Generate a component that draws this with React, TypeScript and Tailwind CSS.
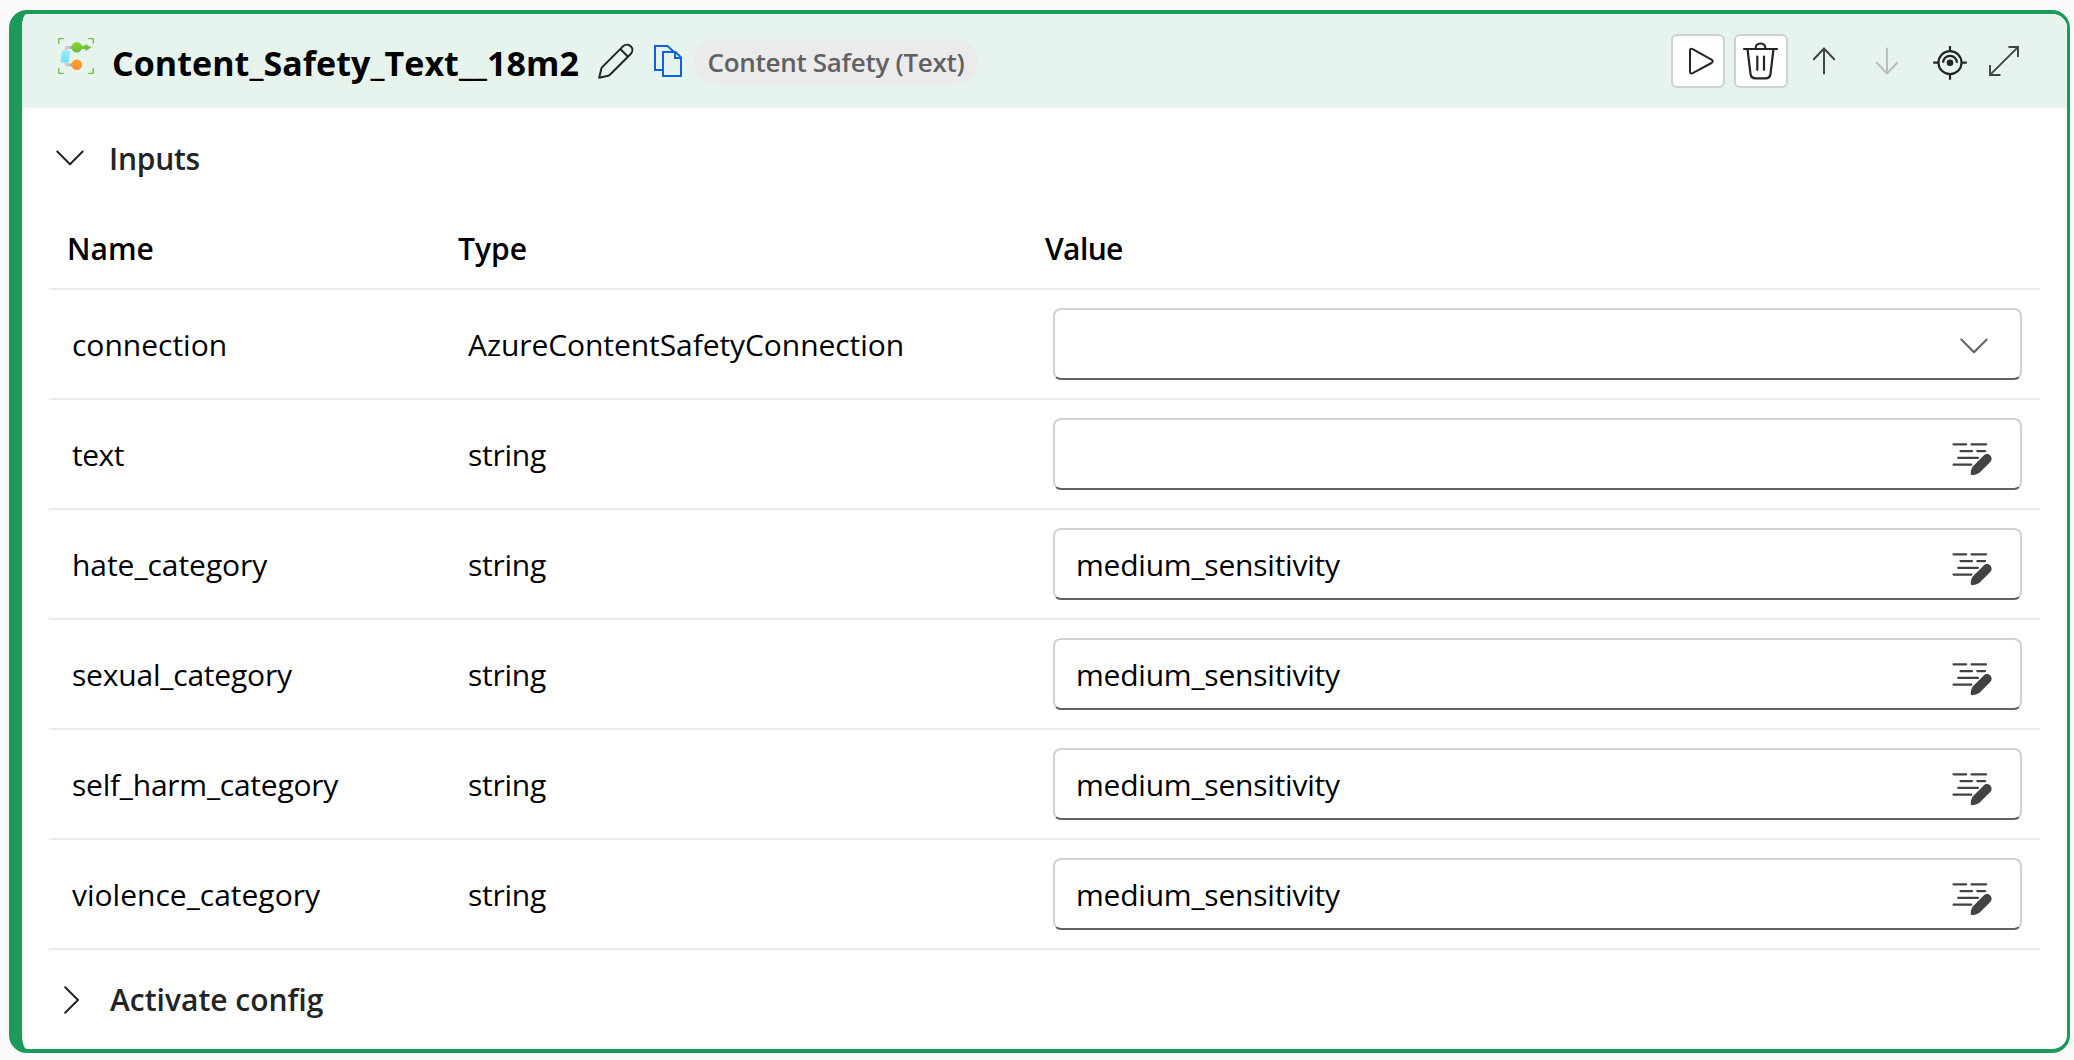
import type { ReactNode } from "react";

type Row = { name: string; nameClass: string; type: string; typeClass: string; value: string; select?: boolean };

const rows: Row[] = [
  { name: "connection", nameClass: "tracking-normal", type: "AzureContentSafetyConnection", typeClass: "tracking-[-0.07px]", value: "", select: true },
  { name: "text", nameClass: "tracking-[-0.5px]", type: "string", typeClass: "tracking-[-0.24px]", value: "" },
  { name: "hate_category", nameClass: "tracking-[-0.05px]", type: "string", typeClass: "tracking-[-0.24px]", value: "medium_sensitivity" },
  { name: "sexual_category", nameClass: "tracking-[-0.2px]", type: "string", typeClass: "tracking-[-0.24px]", value: "medium_sensitivity" },
  { name: "self_harm_category", nameClass: "tracking-[-0.24px]", type: "string", typeClass: "tracking-[-0.24px]", value: "medium_sensitivity" },
  { name: "violence_category", nameClass: "tracking-normal", type: "string", typeClass: "tracking-[-0.24px]", value: "medium_sensitivity" },
];

function FlowIcon() {
  return (
    <svg className="mt-6 h-9 w-9 shrink-0 self-start" viewBox="0 0 36 36" fill="none">
      <defs>
        <linearGradient id="link" x1="0" x2="1" y1="0" y2="0">
          <stop offset="0" stopColor="#dcdcdc" />
          <stop offset="1" stopColor="#a8a8a8" />
        </linearGradient>
        <linearGradient id="sky" x1="0" x2="0" y1="0" y2="1">
          <stop offset="0" stopColor="#9cebff" />
          <stop offset="1" stopColor="#6fe0fb" />
        </linearGradient>
        <linearGradient id="leaf" x1="0" x2="0" y1="0" y2="1">
          <stop offset="0" stopColor="#86d633" />
          <stop offset="1" stopColor="#6fbb38" />
        </linearGradient>
        <linearGradient id="amber" x1="0" x2="0" y1="0" y2="1">
          <stop offset="0" stopColor="#faa21d" />
          <stop offset="1" stopColor="#f78d3a" />
        </linearGradient>
      </defs>
      <path d="M.7 5.8V.7h5M30.3.7h5v5.1M.7 30.2v5.1h5M30.3 35.3h5v-5.1" stroke="#76bc43" strokeWidth="1.3" />
      <path d="M6.2 13V10.6Q6.2 8 8.8 8H14.5v3H9.8q-.9 0-.9.9V13z" fill="url(#link)" />
      <path d="M6.2 24v1.6q0 2.9 2.6 2.9h5.7v-3H9.8q-.9 0-.9-.9V24z" fill="url(#link)" />
      <path d="M4.8 12.7h6.4q1 0 .9 1l-1.3 9.8q-.1 1-1.1 1H3.4q-1 0-.9-1l1.3-9.8q.1-1 1-1z" fill="url(#sky)" />
      <path d="M23 7.7h4.3V5.9L33.5 9.4l-6.2 3.6v-1.9H23z" fill="#72c13c" />
      <circle cx="18.8" cy="9.2" r="5.3" fill="url(#leaf)" />
      <circle cx="18.8" cy="26.8" r="5.3" fill="url(#amber)" />
    </svg>
  );
}

function PencilIcon() {
  return (
    <svg className="h-9 w-9 shrink-0" viewBox="0 0 36 36" fill="none" stroke="#242424" strokeWidth="2" strokeLinejoin="round">
      <path d="M1.2 34.8 3.3 25.7Q3.5 24.8 4.2 24.1L25.2 3.1A5.45 5.45 0 0 1 32.9 10.8L11.9 31.8Q11.2 32.500 10.3 32.7z" />
      <path d="M22.3 6 30 13.7" />
    </svg>
  );
}

function CopyIcon() {
  return (
    <svg className="ml-5 h-8 w-7 shrink-0" viewBox="0 0 28 32" fill="none" stroke="#1160df" strokeWidth="2">
      <path d="M9 25H1V1H13.5L20 7" />
      <path d="M9 7h12.5L27 12.500V31H9z" />
      <path d="M21 7v6h6" />
    </svg>
  );
}

function ChevronDown({ color }: { color: string }) {
  return (
    <svg className="h-4 w-7 shrink-0" viewBox="0 0 28 16" fill="none" stroke={color} strokeWidth="2" strokeLinecap="round" strokeLinejoin="round">
      <path d="M1.3 1.5 14 14.2 26.7 1.5" />
    </svg>
  );
}

function ChevronRight() {
  return (
    <svg className="h-7 w-4 shrink-0" viewBox="0 0 16 28" fill="none" stroke="#242424" strokeWidth="2" strokeLinecap="round" strokeLinejoin="round">
      <path d="M1.2 1.3 14 14 1.2 26.7" />
    </svg>
  );
}

function EditLinesIcon() {
  return (
    <svg className="h-[34px] w-10 shrink-0" viewBox="0 0 40 34" fill="none">
      <path d="M1.5 2.3h12.7M19.5 2.3h14.6M8.5 9.1h11.5M25.3 9.1h7.8M6.2 15.8h19.8M1.5 22.6h17.8" stroke="#424242" strokeWidth="2.2" strokeLinecap="round" />
      <path d="M20.7 24.6 31.7 13.5A4.6 4.6 0 0 1 38.3 20L27.2 31Q24 33 20.4 33.2 18.6 33.3 18.7 31.6 18.7 27.6 20.7 24.6z" fill="#424242" />
    </svg>
  );
}

function Boxed({ children }: { children: ReactNode }) {
  return <button className="flex size-[54px] items-center justify-center rounded-md border-2 border-[#d1d1d1] bg-white">{children}</button>;
}

function Plain({ children }: { children: ReactNode }) {
  return <button className="flex size-[54px] items-center justify-center">{children}</button>;
}

function Actions() {
  return (
    <div className="ml-auto flex items-center gap-[9px]">
      <Boxed>
        <svg className="size-[50px]" viewBox="0 0 50 50" fill="none" stroke="#242424" strokeWidth="2" strokeLinejoin="round">
          <path d="M17 14.8v20.7q0 3 2.7 1.7L38.5 27q2.7-1.7 0-3.4L19.7 13.1Q17 11.8 17 14.8z" />
        </svg>
      </Boxed>
      <Boxed>
        <svg className="size-[50px]" viewBox="0 0 50 50" fill="none" stroke="#242424" strokeWidth="2.2" strokeLinecap="round" strokeLinejoin="round">
          <path d="M8 13h33M19.5 13q0-5.500 5-5.500t5 5.500" />
          <path d="m11.500 13 3 25q.6 4.300 5 4.300h10q4.400 0 5-4.300l3-25M21.300 20.500V33.800M28 20.500V33.800" />
        </svg>
      </Boxed>
      <Plain>
        <svg className="size-[54px]" viewBox="0 0 54 54" fill="none" stroke="#424242" strokeWidth="2" strokeLinecap="round" strokeLinejoin="round">
          <path d="M27 39.5V14.5M16.8 25.3 27 14.5 37.2 25.3" />
        </svg>
      </Plain>
      <Plain>
        <svg className="size-[54px]" viewBox="0 0 54 54" fill="none" stroke="#bdbdbd" strokeWidth="2" strokeLinecap="round" strokeLinejoin="round">
          <path d="M27 14.5V39.5M16.8 28.7 27 39.5 37.2 28.7" />
        </svg>
      </Plain>
      <Plain>
        <svg className="size-[54px]" viewBox="0 0 54 54" fill="none" stroke="#242424" strokeWidth="2.2">
          <circle cx="27" cy="28.7" r="11.5" />
          <path d="M27 12v5.5M27 40v5.7M10.2 28.7h5.3M38.5 28.7h5.3" />
          <path d="M20.1 28.7a6.9 6.9 0 0 1 13.8 0" />
          <circle cx="27" cy="28.7" r="3.3" fill="#242424" stroke="none" />
        </svg>
      </Plain>
      <svg className="ml-[3px] h-[30px] w-[30px]" viewBox="0 0 30 30" fill="none" stroke="#424242" strokeWidth="1.9">
        <path d="M1.3 28.7 28.7 1.3M19.5 1h9.5v10M1 19v10h10.5" />
      </svg>
    </div>
  );
}

export default function App() {
  return (
    <div className="h-[1060px] w-[2074px] bg-[#fafafa] pt-[10px] pl-[9px] font-['Open_Sans','Noto_Sans',sans-serif] text-[30px] leading-10 text-black">
      <section className="flex h-[1043px] w-[2061px] flex-col overflow-hidden rounded-[18px] border-t-4 border-r-[3px] border-b-4 border-l-[13px] border-[#1c9a5a] bg-white">
        <header className="flex h-[94px] shrink-0 items-center bg-[#e7f4ed] pr-12 pl-9">
          <FlowIcon />
          <h1 className="mt-[3px] ml-[18px] w-[486px] shrink-0 text-[34px] font-bold tracking-[0.06px] whitespace-nowrap">Content_Safety_Text__18m2</h1>
          <PencilIcon />
          <CopyIcon />
          <span className="ml-3 flex h-[45px] w-[284px] shrink-0 items-center justify-center rounded-full bg-[#ebebeb] pt-0.5 text-[26px] font-semibold tracking-[-0.3px] whitespace-nowrap text-[#616161]">
            Content Safety (Text)
          </span>
          <Actions />
        </header>

        <button className="flex h-[100px] shrink-0 items-center pl-[34px] text-left text-[#242424]">
          <ChevronDown color="#242424" />
          <span className="mt-0.5 ml-[25px] font-semibold tracking-[-0.24px]">Inputs</span>
        </button>

        <div className="mr-[27px] ml-[27px] shrink-0">
          <div className="grid h-[82px] grid-cols-[392px_587px_1fr] items-center border-b-2 border-[#ebebeb] pt-px font-semibold">
            <span className="pl-[18px]">Name</span>
            <span className="pl-[17px]">Type</span>
            <span className="pl-[17px] tracking-[-0.6px]">Value</span>
          </div>
          {rows.map((row) => (
            <div key={row.name} className="grid h-[110px] grid-cols-[392px_587px_1fr] items-center border-b-2 border-[#ebebeb]">
              <span className={`pt-0.5 pl-[23px] ${row.nameClass}`}>{row.name}</span>
              <span className={`pt-0.5 pl-[27px] ${row.typeClass}`}>{row.type}</span>
              <div className="mr-[18px] ml-[25px] flex h-[72px] items-center justify-between rounded-lg border-2 border-[#d1d1d1] border-b-[#616161] bg-white pl-[21px]">
                <span className="pt-px tracking-[-0.22px]">{row.value}</span>
                {row.select ? (
                  <span className="pt-1 pr-8">
                    <ChevronDown color="#616161" />
                  </span>
                ) : (
                  <span className="pt-[9px] pr-7">
                    <EditLinesIcon />
                  </span>
                )}
              </div>
            </div>
          ))}
        </div>

        <button className="flex flex-1 items-center pl-[42px] text-left text-[#242424]">
          <ChevronRight />
          <span className="mt-px ml-[30px] font-semibold">Activate config</span>
        </button>
      </section>
    </div>
  );
}
